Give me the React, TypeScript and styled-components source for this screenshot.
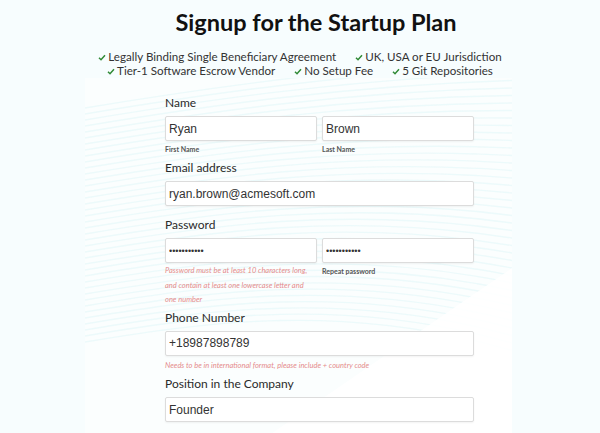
import styled, { createGlobalStyle } from "styled-components";

const GlobalStyle = createGlobalStyle`
  html, body {
    margin: 0;
    padding: 0;
    background: #f7fdfe;
  }
  body {
    font-family: Lato, "Open Sans", sans-serif;
    color: #222;
  }
`;

const features = [
  ["Legally Binding Single Beneficiary Agreement", "UK, USA or EU Jurisdiction"],
  ["Tier-1 Software Escrow Vendor", "No Setup Fee", "5 Git Repositories"],
];

const Check = () => (
  <svg width="8" height="7" viewBox="0 0 8 7">
    <path d="M1 3.8 L3 5.7 L7 1.2" fill="none" stroke="#2f8a35" strokeWidth="1.5" />
  </svg>
);

// faint wavy lines behind the form
const Backdrop = () => {
  const lines = Array.from({ length: 40 }, (_, i) => i);
  return (
    <Waves width="427" height="360" viewBox="0 0 427 360">
      <rect x="0" y="0" width="427" height="360" fill="#fbfefe" />
      {lines.map((i) => {
        const y = 20 + i * 6;
        return (
          <path
            key={i}
            d={`M0 ${y + 10} C120 ${y - 10}, 260 ${y - 30}, 427 ${y - 40 + i * 1.5}`}
            fill="none"
            stroke="#e3f6f9"
            strokeWidth="1.4"
            opacity={0.6}
          />
        );
      })}
      <path d="M180 360 L427 190 L427 360 Z" fill="#ffffff" opacity="0.9" />
    </Waves>
  );
};

export default function App() {
  return (
    <>
      <GlobalStyle />
      <Page>
        <Backdrop />
        <Title>Signup for the Startup Plan</Title>
        <Features>
          {features.map((row, r) => (
            <FeatureRow key={r}>
              {row.map((f) => (
                <Feature key={f}>
                  <Check />
                  {f}
                </Feature>
              ))}
            </FeatureRow>
          ))}
        </Features>
        <Form>
          <Field $gap={4}>
            <Label>Name</Label>
            <Pair>
              <div>
                <Input readOnly value="Ryan" />
                <Hint>First Name</Hint>
              </div>
              <div>
                <Input readOnly value="Brown" />
                <Hint>Last Name</Hint>
              </div>
            </Pair>
          </Field>
          <Field $gap={10}>
            <Label>Email address</Label>
            <Input readOnly value="ryan.brown@acmesoft.com" />
          </Field>
          <Field $gap={1}>
            <Label>Password</Label>
            <Pair>
              <div>
                <Input type="password" $secret readOnly value="aaaaaaaaaaa" />
                <ErrorText>
                  Password must be at least 10 characters long,
                  <br />
                  and contain at least one lowercase letter and
                  <br />
                  one number
                </ErrorText>
              </div>
              <div>
                <Input type="password" $secret readOnly value="aaaaaaaaaaa" />
                <Hint $loose>Repeat password</Hint>
              </div>
            </Pair>
          </Field>
          <Field $gap={2}>
            <Label>Phone Number</Label>
            <Input readOnly value="+18987898789" />
            <ErrorText $single>Needs to be in international format, please include + country code</ErrorText>
          </Field>
          <Field $gap={2}>
            <Label>Position in the Company</Label>
            <Input readOnly value="Founder" />
          </Field>
        </Form>
      </Page>
    </>
  );
}

const Page = styled.div`
  position: relative;
  width: 600px;
  height: 433px;
  overflow: hidden;
  padding-top: 7px;
  box-sizing: border-box;
`;

const Waves = styled.svg`
  position: absolute;
  left: 85px;
  top: 78px;
  z-index: 0;
`;

const Title = styled.h1`
  position: relative;
  margin: 0;
  padding-left: 32px;
  text-align: center;
  font-size: 23.5px;
  line-height: 30px;
  font-weight: 700;
  color: #111;
`;

const Features = styled.div`
  position: relative;
  margin-top: 13px;
  display: flex;
  flex-direction: column;
  align-items: center;
`;

const FeatureRow = styled.div`
  display: flex;
  gap: 19px;
  font-size: 11.6px;
  line-height: 14px;
  color: #333;
`;

const Feature = styled.span`
  display: inline-flex;
  align-items: center;
  gap: 2px;
`;

const Form = styled.div`
  position: relative;
  margin: 16px 0 0 165px;
  width: 309px;
  display: flex;
  flex-direction: column;
`;

const Field = styled.div<{ $gap: number }>`
  display: flex;
  flex-direction: column;
  margin-bottom: ${({ $gap }) => $gap}px;
`;

const Label = styled.div`
  font-size: 12px;
  line-height: 18px;
  color: #2a2a2a;
  margin-bottom: 4px;
`;

const Pair = styled.div`
  display: grid;
  grid-template-columns: 1fr 1fr;
  gap: 5px;
`;

const Input = styled.input<{ $secret?: boolean }>`
  display: block;
  width: 100%;
  box-sizing: border-box;
  height: 25px;
  margin: 0;
  padding: 0 3px;
  border: 1px solid #dcdcdc;
  border-radius: 2px;
  box-shadow: 0 1px 2px rgba(0, 0, 0, 0.05);
  background: #fff;
  font-family: "Liberation Sans", Arial, sans-serif;
  font-size: ${({ $secret }) => ($secret ? "9px" : "12px")};
  color: #333;
  outline: none;
`;

const Hint = styled.div<{ $loose?: boolean }>`
  font-size: 7px;
  font-weight: 700;
  color: #555;
  line-height: ${({ $loose }) => ($loose ? "14.5px" : "12px")};
  margin-top: ${({ $loose }) => ($loose ? "1px" : "2px")};
`;

const ErrorText = styled.div<{ $single?: boolean }>`
  font-size: 7.5px;
  font-style: italic;
  color: #e58c8c;
  line-height: 14.5px;
  margin-top: ${({ $single }) => ($single ? "3px" : "1px")};
  white-space: nowrap;
`;
